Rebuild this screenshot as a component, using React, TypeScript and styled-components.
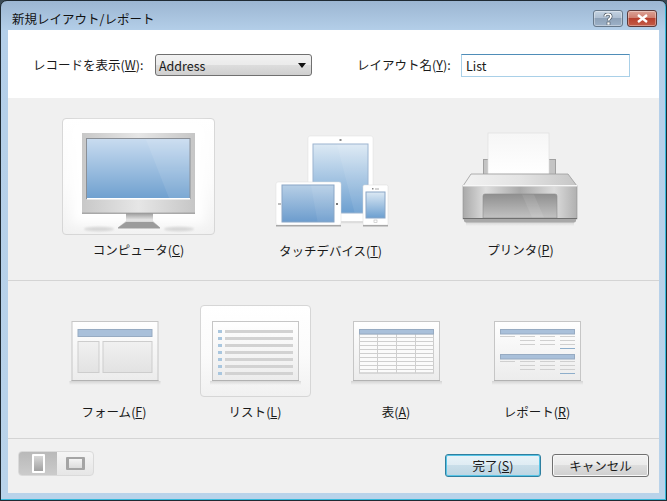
import React from "react";
import styled, { createGlobalStyle } from "styled-components";

const Global = createGlobalStyle`
  html, body { margin: 0; padding: 0; background: #3a4a55; }
  #root { width: 667px; height: 501px; overflow: hidden; }
  * { box-sizing: border-box; }
`;

const font = `"Noto Sans CJK JP", "Open Sans", "Liberation Sans", sans-serif`;

const Window = styled.div`
  width: 667px;
  height: 501px;
  display: flex;
  flex-direction: column;
  padding: 0 7px 7px;
  border: 1px solid #1f2a33;
  border-radius: 7px 7px 0 0;
  background: linear-gradient(180deg, #9cb6d2 0, #b4cfe9 30px, #b9d3ea 100%);
  box-shadow: inset -1px -1px 0 #35b8da;
  font-family: ${font};
  font-size: 12.5px;
  color: #1a1a1a;
`;

const TitleBar = styled.div`
  height: 29px;
  flex: none;
  display: flex;
  align-items: center;
  justify-content: space-between;
  padding: 6px 2px 0 4px;
`;

const Title = styled.span`
  font-size: 12.5px;
  color: #111;
`;

const Caption = styled.div`
  display: flex;
  align-items: flex-start;
  gap: 4px;
  align-self: flex-start;
  margin-top: 3px;
`;

const CaptionButton = styled.div<{ $close?: boolean }>`
  width: 30px;
  height: 17px;
  display: flex;
  align-items: center;
  justify-content: center;
  border: 1px solid ${(p) => (p.$close ? "#5c3a3a" : "#66788a")};
  border-radius: 3px;
  background: ${(p) =>
    p.$close
      ? "linear-gradient(180deg, #dba296 0, #cf7f70 45%, #b8402e 50%, #c45c48 100%)"
      : "linear-gradient(180deg, #c4d3e2 0, #aebfd2 45%, #8ea2b8 50%, #9cb1c8 100%)"};
  box-shadow: inset 0 0 0 1px rgba(255, 255, 255, 0.35);
  svg { display: block; }
`;

const Client = styled.div`
  flex: 1;
  display: flex;
  flex-direction: column;
  background: #f0f0f0;
  min-height: 0;
`;

const FormRow = styled.div`
  height: 68px;
  flex: none;
  display: flex;
  align-items: flex-start;
  background: #fff;
  padding: 24px 0 0 25px;
`;

const FieldLabel = styled.label<{ $w: number }>`
  width: ${(p) => p.$w}px;
  flex: none;
  font-size: 12.5px;
  line-height: 22px;
  white-space: nowrap;
`;

const Key = styled.span`
  text-decoration: underline;
  text-underline-offset: 1px;
`;

const Select = styled.div`
  width: 157px;
  height: 22px;
  flex: none;
  display: flex;
  align-items: center;
  justify-content: space-between;
  margin-right: 45px;
  padding: 0 5px 0 3px;
  border: 1px solid #707070;
  border-radius: 3px;
  background: linear-gradient(180deg, #f2f2f2 0, #ebebeb 48%, #dddddd 50%, #cfcfcf 100%);
  font-size: 12.5px;
`;

const Arrow = styled.span`
  width: 0;
  height: 0;
  border-left: 4px solid transparent;
  border-right: 4px solid transparent;
  border-top: 5px solid #111;
`;

const TextBox = styled.div`
  width: 169px;
  height: 23px;
  flex: none;
  display: flex;
  align-items: center;
  padding: 0 0 1px 4px;
  border: 1px solid #a9d0e8;
  border-top-color: #4f8db8;
  font-size: 12.5px;
  background: #fff;
`;

const Section = styled.div<{ $h: number; $pad: string; $cols: string; $gap: number }>`
  height: ${(p) => p.$h}px;
  flex: none;
  display: grid;
  grid-template-columns: ${(p) => p.$cols};
  column-gap: ${(p) => p.$gap}px;
  align-items: start;
  padding: ${(p) => p.$pad};
  border-bottom: 1px solid #d4d4d4;
`;

const Choice = styled.div<{ $w: number }>`
  width: ${(p) => p.$w}px;
  display: flex;
  flex-direction: column;
  align-items: center;
`;

const Tile = styled.div<{ $on?: boolean; $w: number; $h: number }>`
  width: ${(p) => p.$w}px;
  height: ${(p) => p.$h}px;
  border-radius: 4px;
  border: 1px solid ${(p) => (p.$on ? "#d6d6d6" : "transparent")};
  background: ${(p) =>
    p.$on ? "linear-gradient(180deg, #ffffff 0, #fbfbfb 55%, #f1f1f1 100%)" : "transparent"};
  svg { display: block; margin: -1px; }
`;

const ChoiceLabel = styled.div<{ $mt: number }>`
  margin-top: ${(p) => p.$mt}px;
  font-size: 12.5px;
  line-height: 16px;
  white-space: nowrap;
`;

const Footer = styled.div`
  flex: 1;
  display: flex;
  align-items: flex-start;
  justify-content: space-between;
  padding: 12px 10px 0;
`;

const Toggle = styled.div`
  width: 76px;
  height: 25px;
  display: flex;
  border: 1px solid #dadada;
  border-radius: 4px;
  overflow: hidden;
  background: linear-gradient(180deg, #f5f5f5, #e6e6e6);
`;

const ToggleCell = styled.div<{ $on?: boolean }>`
  width: ${(p) => (p.$on ? 38 : 36)}px;
  display: flex;
  align-items: center;
  justify-content: center;
  background: ${(p) => (p.$on ? "linear-gradient(180deg, #b9b9b9, #cbcbcb)" : "transparent")};
`;

const Phone = styled.div`
  width: 13px;
  height: 19px;
  border: 2px solid #fff;
  border-radius: 1px;
  background: linear-gradient(180deg, #d8d8d8, #a0a0a0);
`;

const Land = styled.div`
  width: 19px;
  height: 13px;
  border-style: solid;
  border-color: #a4a4a4;
  border-width: 2px 3px;
  border-radius: 1px;
  background: linear-gradient(180deg, #f4f4f4, #dcdcdc);
`;

const Buttons = styled.div`
  display: flex;
  gap: 11px;
  margin-top: 3px;
`;

const Button = styled.div<{ $def?: boolean }>`
  width: ${(p) => (p.$def ? 96 : 97)}px;
  height: 23px;
  display: flex;
  align-items: center;
  justify-content: center;
  border: 1px solid ${(p) => (p.$def ? "#2f7f9f" : "#707070")};
  border-radius: 3px;
  font-size: 12.5px;
  background: ${(p) =>
    p.$def
      ? "linear-gradient(180deg, #e8f3f8 0, #dfecf3 48%, #c9dee9 50%, #bdd5e2 100%)"
      : "linear-gradient(180deg, #f2f2f2 0, #ebebeb 48%, #dddddd 50%, #cfcfcf 100%)"};
  box-shadow: ${(p) => (p.$def ? "inset 0 0 0 1px #57c4e6" : "inset 0 0 0 1px #f8f8f8")};
`;

const Defs = () => (
  <svg width="0" height="0" style={{ position: "absolute" }}>
    <defs>
      <linearGradient id="scr" x1="0" y1="0" x2="0" y2="1">
        <stop offset="0" stopColor="#c9dcf0" />
        <stop offset="1" stopColor="#6fa0cf" />
      </linearGradient>
      <linearGradient id="scr2" x1="0" y1="0" x2="0" y2="1">
        <stop offset="0" stopColor="#dce9f4" />
        <stop offset="1" stopColor="#6c9fd0" />
      </linearGradient>
      <linearGradient id="scr3" x1="0" y1="0" x2="0" y2="1">
        <stop offset="0" stopColor="#b7cfe6" />
        <stop offset="1" stopColor="#6c9ccd" />
      </linearGradient>
      <linearGradient id="bezel" x1="0" y1="0" x2="1" y2="0">
        <stop offset="0" stopColor="#c8c8c8" />
        <stop offset=".5" stopColor="#e6e6e6" />
        <stop offset="1" stopColor="#c6c6c6" />
      </linearGradient>
      <linearGradient id="stand" x1="0" y1="0" x2="0" y2="1">
        <stop offset="0" stopColor="#9a9a9a" />
        <stop offset=".45" stopColor="#e6e6e6" />
        <stop offset="1" stopColor="#9d9d9d" />
      </linearGradient>
      <linearGradient id="pbody" x1="0" y1="0" x2="1" y2="0">
        <stop offset="0" stopColor="#a9a9a9" />
        <stop offset=".2" stopColor="#dedede" />
        <stop offset=".5" stopColor="#a9a9a9" />
        <stop offset=".8" stopColor="#dcdcdc" />
        <stop offset="1" stopColor="#b0b0b0" />
      </linearGradient>
      <linearGradient id="plid" x1="0" y1="0" x2="1" y2="0">
        <stop offset="0" stopColor="#f2f2f2" />
        <stop offset=".5" stopColor="#e4e4e4" />
        <stop offset="1" stopColor="#c6c6c6" />
      </linearGradient>
      <linearGradient id="pslot" x1="0" y1="0" x2="0" y2="1">
        <stop offset="0" stopColor="#8f8f8f" />
        <stop offset="1" stopColor="#c2c2c2" />
      </linearGradient>
      <linearGradient id="paper" x1="0" y1="0" x2="0" y2="1">
        <stop offset="0" stopColor="#f6f6f6" />
        <stop offset="1" stopColor="#ffffff" />
      </linearGradient>
      <linearGradient id="card" x1="0" y1="0" x2="0" y2="1">
        <stop offset="0" stopColor="#ffffff" />
        <stop offset="1" stopColor="#ececec" />
      </linearGradient>
      <linearGradient id="pane" x1="0" y1="0" x2="0" y2="1">
        <stop offset="0" stopColor="#f1f1f1" />
        <stop offset="1" stopColor="#e2e2e2" />
      </linearGradient>
      <linearGradient id="shade" x1="0" y1="0" x2="0" y2="1">
        <stop offset="0" stopColor="#000" stopOpacity=".12" />
        <stop offset="1" stopColor="#000" stopOpacity="0" />
      </linearGradient>
      <filter id="blur1" x="-20%" y="-100%" width="140%" height="300%">
        <feGaussianBlur stdDeviation="1.2" />
      </filter>
      <filter id="glow" x="-20%" y="-20%" width="140%" height="140%">
        <feGaussianBlur stdDeviation="6" />
      </filter>
    </defs>
  </svg>
);

const ComputerIcon = () => (
  <svg width="153" height="117" viewBox="62 118 153 117">
    <rect x="72" y="124" width="133" height="100" fill="#fff" filter="url(#glow)" />
    <ellipse cx="99" cy="229" rx="15" ry="2.2" fill="#000" opacity=".12" filter="url(#blur1)" />
    <ellipse cx="179" cy="229" rx="15" ry="2.2" fill="#000" opacity=".12" filter="url(#blur1)" />
    <path d="M126 213h27v8l7 6.5v1h-42v-1l8-6.5z" fill="url(#stand)" />
    <path d="M118 228l8-6h27l7 6z" fill="#9b9b9b" />
    <rect x="82" y="133" width="113" height="80.5" fill="url(#bezel)" />
    <rect x="82" y="212.7" width="113" height="1" fill="#8e8e8e" />
    <rect x="86.5" y="138.5" width="103.5" height="60" fill="url(#scr)" stroke="#8a8f96" strokeWidth="1" />
    <path d="M146 139.5h43.5v58.500h-20.500z" fill="#fff" opacity=".09" />
    <rect x="87" y="198" width="103" height="1.500" fill="#fff" />
  </svg>
);

const TouchIcon = () => (
  <svg width="153" height="117" viewBox="254 118 153 117">
    <rect x="308" y="136" width="65" height="86" rx="2" fill="#fff" stroke="#dedede" strokeWidth=".5" />
    <rect x="308" y="221" width="65" height="3" fill="url(#shade)" />
    <rect x="339.500" y="139" width="2" height="2" fill="#8a8a8a" />
    <rect x="313" y="144" width="55" height="69" fill="url(#scr2)" stroke="#9cb4d0" strokeWidth="1" />
    <path d="M337 144.500h30.500v68h-13z" fill="#fff" opacity=".08" />
    <rect x="276" y="182" width="65" height="43" rx="2" fill="#fff" stroke="#dcdcdc" strokeWidth=".5" />
    <rect x="276" y="225" width="65" height="1.500" fill="#a8a8a8" />
    <rect x="282" y="185" width="52" height="37" fill="url(#scr3)" stroke="#8aa6c6" strokeWidth="1" />
    <path d="M311 185.500h22.500v36h-16z" fill="#fff" opacity=".07" />
    <rect x="278" y="203" width="3" height="2" fill="#bdbdbd" />
    <rect x="336" y="203" width="2" height="2" fill="#777" />
    <rect x="363" y="185" width="25" height="40" rx="1.500" fill="#fff" stroke="#d8d8d8" strokeWidth=".5" />
    <rect x="363" y="225" width="25" height="1.500" fill="#a8a8a8" />
    <rect x="372" y="188" width="1.500" height="1.500" fill="#888" />
    <rect x="375" y="188.500" width="4" height="1" fill="#aaa" />
    <rect x="366" y="192" width="19" height="26" fill="url(#scr2)" stroke="#8aa6c6" strokeWidth="1" />
    <rect x="374" y="220" width="3" height="2.500" fill="#fff" stroke="#bbb" strokeWidth=".6" />
  </svg>
);

const PrinterIcon = () => (
  <svg width="153" height="117" viewBox="444 118 153 117">
    <rect x="466" y="222" width="108" height="4" fill="url(#shade)" />
    <rect x="483.500" y="159.500" width="72" height="16" fill="#c4c4c4" stroke="#a0a0a0" strokeWidth="1" />
    <rect x="488" y="133" width="61" height="41" fill="url(#paper)" stroke="#dcdcdc" strokeWidth=".6" />
    <path d="M471 174h97l9 12H463z" fill="url(#plid)" stroke="#9c9c9c" strokeWidth=".8" />
    <rect x="463" y="186" width="114" height="33" fill="url(#pbody)" stroke="#929292" strokeWidth=".6" />
    <rect x="463" y="185" width="114" height="1.500" fill="#f7f7f7" />
    <path d="M483 218v-22a2 2 0 0 1 2-2h70a2 2 0 0 1 2 2v22z" fill="url(#pslot)" stroke="#8f8f8f" strokeWidth=".6" />
    <path d="M522 194.500h12l10 23h-12z" fill="#fff" opacity=".09" />
    <rect x="463" y="218" width="114" height="1" fill="#6f6f6f" />
    <path d="M464 219h112v1.500a2 2 0 0 1-2 2H466a2 2 0 0 1-2-2z" fill="#a8a8a8" />
  </svg>
);

const Card = ({ x }: { x: number }) => (
  <>
    <rect x={x - 2} y={381} width={91} height={4} fill="url(#shade)" />
    <rect x={x + 0.5} y={321.5} width={86} height={59} fill="url(#card)" stroke="#c6c6c6" strokeWidth="1" />
    <rect x={x} y={380} width={87} height={1} fill="#b2b2b2" />
  </>
);

const FormIcon = () => (
  <svg width="111" height="92" viewBox="58.500 305 111 92">
    <Card x={71} />
    <rect x="77.500" y="329.500" width="74" height="7" fill="#a9c0da" stroke="#97abc2" strokeWidth="1" />
    <rect x="77.500" y="341.500" width="21" height="31" fill="url(#pane)" stroke="#cdcdcd" strokeWidth="1" />
    <rect x="102.500" y="341.500" width="49" height="31" fill="url(#pane)" stroke="#cdcdcd" strokeWidth="1" />
  </svg>
);

const listRows = [330, 337, 344, 351, 358, 365, 372];

const ListIcon = () => (
  <svg width="111" height="92" viewBox="200 305 111 92">
    <Card x={212} />
    {listRows.map((y) => (
      <g key={y}>
        <rect x="218" y={y} width="4" height="3" fill="#a9c6de" />
        <rect x="225" y={y} width="68" height="3" fill="#d2d2d2" />
      </g>
    ))}
  </svg>
);

const tableRows = [337.5, 341.5, 345.5, 349.5, 353.5, 357.5, 361.5, 365.5, 369.5, 373];
const tableCols = [377.5, 396.5, 415.5];

const TableIcon = () => (
  <svg width="111" height="92" viewBox="341 305 111 92">
    <Card x={353} />
    <rect x="359.500" y="334" width="74" height="39" fill="#fbfbfb" stroke="#cdcdcd" strokeWidth="1" />
    {tableRows.map((y) => (
      <rect key={y} x="359" y={y - 0.5} width="75" height="1" fill="#cfcfcf" />
    ))}
    {tableCols.map((x) => (
      <rect key={x} x={x - 0.5} y="334" width="1" height="39" fill="#cfcfcf" />
    ))}
    <rect x="359.500" y="329.500" width="74" height="4.500" fill="#a9c0da" stroke="#97abc2" strokeWidth="1" />
  </svg>
);

const ReportBlock = ({ top }: { top: number }) => (
  <>
    <rect x="500.500" y={top + 0.5} width="74" height="4.500" fill="#a9c0da" stroke="#97abc2" strokeWidth="1" />
    <rect x="500" y={top + 7} width="15" height="1" fill="#cfcfcf" />
    {[520, 540, 560].map((x) =>
      [7, 11, 15].map((d) => (
        <rect key={`${x}-${d}`} x={x} y={top + d} width="15" height="1" fill="#cfcfcf" />
      ))
    )}
    <rect x="560" y={top + 19} width="15" height="1" fill="#8eaecb" />
  </>
);

const ReportIcon = () => (
  <svg width="111" height="92" viewBox="482 305 111 92">
    <Card x={494} />
    <ReportBlock top={329} />
    <ReportBlock top={354} />
  </svg>
);

const Shortcut = ({ k }: { k: string }) => (
  <>
    (<Key>{k}</Key>)
  </>
);

export default function App() {
  return (
    <>
      <Global />
      <Defs />
      <Window>
        <TitleBar>
          <Title>新規レイアウト/レポート</Title>
          <Caption>
            <CaptionButton>
              <svg width="10" height="12" viewBox="0 0 10 12">
                <path
                  d="M2 3.500C2 1.800 3.400 1 5 1s3 .8 3 2.500C8 5.500 5.500 5.500 5.500 7.500"
                  fill="none"
                  stroke="#4a5660"
                  strokeWidth="3"
                />
                <path
                  d="M2 3.500C2 1.800 3.400 1 5 1s3 .8 3 2.500C8 5.500 5.500 5.500 5.500 7.500"
                  fill="none"
                  stroke="#fff"
                  strokeWidth="1.700"
                />
                <rect x="4" y="9" width="3" height="3" fill="#fff" stroke="#4a5660" strokeWidth=".6" />
              </svg>
            </CaptionButton>
            <CaptionButton $close>
              <svg width="13" height="9" viewBox="0 0 13 9">
                <path d="M2 1l9 7M11 1L2 8" stroke="#fff" strokeWidth="2.400" />
              </svg>
            </CaptionButton>
          </Caption>
        </TitleBar>
        <Client>
          <FormRow>
            <FieldLabel $w={122}>
              レコードを表示
              <Shortcut k="W" />:
            </FieldLabel>
            <Select>
              Address
              <Arrow />
            </Select>
            <FieldLabel $w={104}>
              レイアウト名
              <Shortcut k="Y" />:
            </FieldLabel>
            <TextBox>List</TextBox>
          </FormRow>
          <Section $h={183} $pad="20px 0 0 54px" $cols="192px 190px 153px" $gap={0}>
            <Choice $w={153}>
              <Tile $on $w={153} $h={117}>
                <ComputerIcon />
              </Tile>
              <ChoiceLabel $mt={7}>
                コンピュータ
                <Shortcut k="C" />
              </ChoiceLabel>
            </Choice>
            <Choice $w={153}>
              <Tile $w={153} $h={117}>
                <TouchIcon />
              </Tile>
              <ChoiceLabel $mt={8}>
                タッチデバイス
                <Shortcut k="T" />
              </ChoiceLabel>
            </Choice>
            <Choice $w={153}>
              <Tile $w={153} $h={117}>
                <PrinterIcon />
              </Tile>
              <ChoiceLabel $mt={7}>
                プリンタ
                <Shortcut k="P" />
              </ChoiceLabel>
            </Choice>
          </Section>
          <Section $h={158} $pad="24px 0 0 50.5px" $cols="repeat(4, 111px)" $gap={30}>
            <Choice $w={111}>
              <Tile $w={111} $h={92}>
                <FormIcon />
              </Tile>
              <ChoiceLabel $mt={7}>
                フォーム
                <Shortcut k="F" />
              </ChoiceLabel>
            </Choice>
            <Choice $w={111}>
              <Tile $on $w={111} $h={92}>
                <ListIcon />
              </Tile>
              <ChoiceLabel $mt={7}>
                リスト
                <Shortcut k="L" />
              </ChoiceLabel>
            </Choice>
            <Choice $w={111}>
              <Tile $w={111} $h={92}>
                <TableIcon />
              </Tile>
              <ChoiceLabel $mt={7}>
                表
                <Shortcut k="A" />
              </ChoiceLabel>
            </Choice>
            <Choice $w={111}>
              <Tile $w={111} $h={92}>
                <ReportIcon />
              </Tile>
              <ChoiceLabel $mt={7}>
                レポート
                <Shortcut k="R" />
              </ChoiceLabel>
            </Choice>
          </Section>
          <Footer>
            <Toggle>
              <ToggleCell $on>
                <Phone />
              </ToggleCell>
              <ToggleCell>
                <Land />
              </ToggleCell>
            </Toggle>
            <Buttons>
              <Button $def>
                完了
                <Shortcut k="S" />
              </Button>
              <Button>キャンセル</Button>
            </Buttons>
          </Footer>
        </Client>
      </Window>
    </>
  );
}
